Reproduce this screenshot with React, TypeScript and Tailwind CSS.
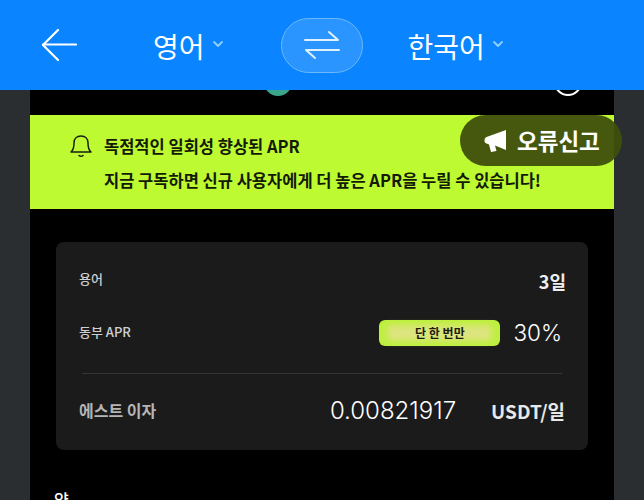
import { ChevronDown } from "lucide-react";

const cjk = "font-['Noto_Sans_CJK_KR','Noto_Sans',sans-serif]";

const LangPicker = ({ label }: { label: string }) => (
  <div className="mt-[2px] flex items-center gap-[5px]">
    <span className="text-[28px] leading-none text-white">{label}</span>
    <ChevronDown size={16} strokeWidth={2.75} className="mt-[-4px] text-[#8fd0ff]" />
  </div>
);

const App = () => {
  return (
    <div className={`relative h-[500px] w-[644px] overflow-hidden bg-[#2a2e30] ${cjk}`}>
      {/* top translate bar */}
      <header className="relative z-10 flex h-[90px] items-center bg-[#0a84ff] pl-[41px]">
        <svg width="36" height="32" viewBox="0 0 36 32" fill="none" stroke="white" strokeWidth="2.2" strokeLinecap="round" strokeLinejoin="round">
          <path d="M17 1 L2 16 L17 31" />
          <path d="M2 15.5 H35" />
        </svg>
        <div className="ml-[76px]">
          <LangPicker label="영어" />
        </div>
        <div className="ml-[55px] flex h-[55px] w-[82px] items-center justify-center rounded-full border border-[#6cb8fb] bg-[#2a94ff]">
          <svg width="36" height="30" viewBox="0 0 36 30" fill="none" stroke="#dff0ff" strokeWidth="2" strokeLinecap="round" strokeLinejoin="round">
            <path d="M1 10 H34 L25 2" />
            <path d="M35 20 H2 L11 28" />
          </svg>
        </div>
        <div className="ml-[45px]">
          <LangPicker label="한국어" />
        </div>
      </header>

      <main className="mx-[30px] h-[410px] bg-black">
        {/* bits of the row hidden behind the bar */}
        <div className="flex h-[25px] justify-between overflow-hidden">
          <div className="ml-[234px] mt-[-22px] h-[28px] w-[28px] rounded-full bg-[#3aa58a]" />
          <div className="mr-[32px] mt-[-22px] h-[28px] w-[28px] rounded-full border-2 border-white" />
        </div>

        <section className="flex h-[94px] flex-col justify-center gap-[11px] bg-[#bdfa32] pl-[40px] text-[#141a05]">
          <div className="flex items-center gap-[12px]">
            <svg width="22" height="24" viewBox="0 0 22 24" fill="none" stroke="#1a1f10" strokeWidth="1.5" strokeLinecap="round" strokeLinejoin="round">
              <path d="M1 18 C3.5 16 4 14 4 9 C4 4.5 7 2 11 2 C15 2 18 4.5 18 9 C18 14 18.5 16 21 18 Z" />
              <path d="M9 21.5 C10 22.6 12 22.6 13 21.5" />
            </svg>
            <span className="text-[16.5px] font-bold leading-[22px]">독점적인 일회성 향상된 APR</span>
          </div>
          <p className="pl-[34px] text-[16.5px] font-bold leading-[22px]">
            지금 구독하면 신규 사용자에게 더 높은 APR을 누릴 수 있습니다!
          </p>
        </section>

        <section className="ml-[26px] mt-[33px] h-[208px] w-[532px] rounded-[8px] bg-[#1b1b1b] px-[23px] pt-[27px]">
          <div className="flex h-[24px] items-center justify-between">
            <span className="mt-[-4px] text-[13px] font-medium text-[#cfcfcf]">용어</span>
            <span className="mr-[-1px] text-[18px] font-bold text-[#eeeeee]">3일</span>
          </div>
          <div className="mt-[27px] flex h-[26px] items-center justify-between">
            <span className="mt-[-2px] text-[13px] font-medium text-[#cfcfcf]">동부 APR</span>
            <div className="flex items-center gap-[13px] pr-[3px]">
              <div className="relative flex h-[26px] w-[121px] items-center justify-center rounded-[6px] bg-[#bdf03c]">
                <div className="absolute inset-x-[8px] inset-y-[5px] rounded-[4px] bg-[#dce47e] blur-[3px]" />
                <span className="relative text-[12px] font-bold text-[#1a1c10]">단 한 번만</span>
              </div>
              <span className="font-['Inter',sans-serif] text-[22.5px] font-light text-white">30%</span>
            </div>
          </div>
          <div className="mx-[3px] mt-[27px] border-t border-[#353535]" />
          <div className="mt-[23px] flex h-[28px] items-center justify-between">
            <span className="mt-[-3px] text-[16px] font-bold text-[#b5b5b5]">에스트 이자</span>
            <div className="flex items-center gap-[35px]">
              <span className="font-['Inter',sans-serif] text-[24px] font-light text-white">0.00821917</span>
              <span className="text-[19px] font-bold text-[#e8e8e8]">USDT/일</span>
            </div>
          </div>
        </section>

        <div className="ml-[24px] mt-[41px] text-[16px] font-medium leading-none text-white">약</div>
      </main>

      {/* floating report button */}
      <button className="absolute left-[460px] top-[115px] z-20 flex h-[51px] w-[162px] items-center gap-[9px] rounded-full bg-[#3f4f0c]/95 pl-[24px] text-[22.5px] font-bold text-white">
        <svg width="24" height="24" viewBox="0 0 24 24" fill="white">
          <path d="M22 1 V21 L11 16.5 L12.5 22 L7 23 L5 15.5 L2.5 14.5 C1 14 0.5 13 0.5 11.5 C0.5 10 1 8.8 2.5 8 Z" />
        </svg>
        <span>오류신고</span>
      </button>
    </div>
  );
};

export default App;
